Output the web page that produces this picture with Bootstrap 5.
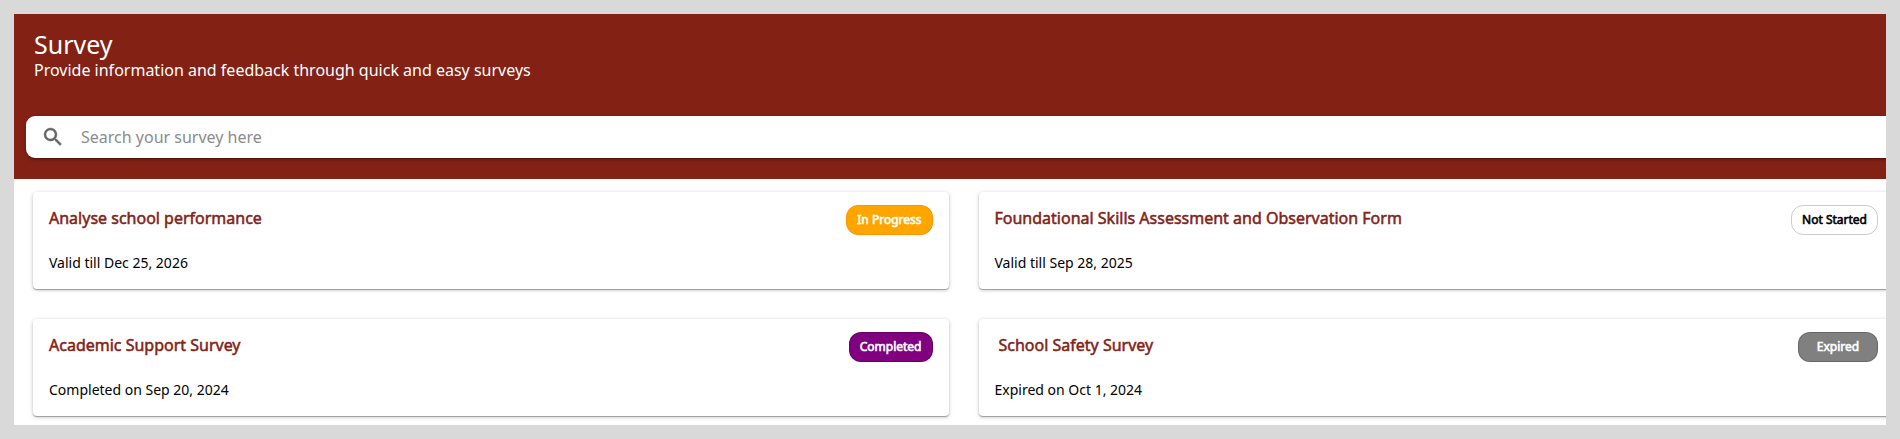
<!DOCTYPE html>
<html lang="en">
<head>
<meta charset="utf-8">
<meta name="viewport" content="width=device-width, initial-scale=1">
<title>Survey</title>
<link rel="stylesheet" href="https://cdn.jsdelivr.net/npm/bootstrap@5.3.0/dist/css/bootstrap.min.css">
<style>
  body { font-family: "Noto Sans", "Open Sans", sans-serif; background: #d9d9d9; color: #000; padding: 14px; }
  .survey-page { background: #fff; overflow: hidden; }
  .survey-head { background: #832115; padding: 16px 0 21px 12px; }
  .survey-head h1 { font-size: 25px; line-height: 28px; font-weight: 400; }
  .survey-head p { font-size: 16px; line-height: 24px; }
  .head-text { padding-left: 8px; margin-bottom: 34px; }
  .search-bar { height: 42px; margin-right: -12px; padding-left: 15px; gap: 12px; background: #fff; border-radius: 9px;
    box-shadow: 0 3px 1px -2px rgba(0,0,0,.2), 0 2px 2px rgba(0,0,0,.14), 0 1px 5px rgba(0,0,0,.12); }
  .search-bar .form-control { font-size: 16px; line-height: 24px; padding: 0 4px; }
  .search-bar .form-control::placeholder { color: #8b8b8b; }
  /* the card grid runs past the right edge of the page */
  .survey-grid { display: grid; grid-template-columns: 1fr 1fr; gap: 30px; padding: 13px 0 9px 19px; margin-right: -8px; }
  .survey-card { height: 97px; padding: 13px 16px; border: 0; border-radius: 4px;
    box-shadow: 0 1px 1px rgba(0,0,0,.3), 0 1px 4px rgba(0,0,0,.22); }
  .survey-card h2 { font-size: 16px; line-height: 26px; font-weight: 400; color: #832115; -webkit-text-stroke: .5px #832115; }
  .survey-card p { font-size: 14px; line-height: 20px; margin-top: 18px; }
  .status { height: 30px; min-width: 80px; padding: 0 10px; border: 1px solid rgba(0,0,0,.2); border-radius: 12px;
    font-size: 12px; line-height: 28px; text-align: center; -webkit-text-stroke: .6px currentColor; }
  .status-progress { background: orange; border-color: #ff9500; color: #fff; }
  .status-done { background: purple; color: #fff; }
  .status-expired { background: gray; color: #fff; }
</style>
</head>
<body>
<main class="survey-page">
  <header class="survey-head">
    <div class="head-text text-white">
      <h1 class="mb-0">Survey</h1>
      <p class="mb-0">Provide information and feedback through quick and easy surveys</p>
    </div>
    <form class="search-bar d-flex align-items-center" role="search">
      <svg width="24" height="24" viewBox="0 0 24 24" fill="#666" stroke="#666" stroke-width=".5" class="flex-shrink-0" aria-hidden="true"><path d="M15.5 14h-.79l-.28-.27A6.471 6.471 0 0 0 16 9.5 6.5 6.5 0 1 0 9.5 16c1.61 0 3.09-.59 4.23-1.57l.27.28v.79l5 4.99L20.49 19l-4.99-5zm-6 0C7.01 14 5 11.99 5 9.5S7.01 5 9.5 5 14 7.01 14 9.5 11.99 14 9.5 14z"/></svg>
      <input type="text" class="form-control border-0 shadow-none bg-transparent" placeholder="Search your survey here" aria-label="Search your survey here">
    </form>
  </header>
  <section class="survey-grid">
    <article class="card survey-card">
      <div class="d-flex justify-content-between">
        <h2 class="mb-0">Analyse school performance</h2>
        <span class="status status-progress">In Progress</span>
      </div>
      <p class="mb-0">Valid till Dec 25, 2026</p>
    </article>
    <article class="card survey-card">
      <div class="d-flex justify-content-between">
        <h2 class="mb-0">Foundational Skills Assessment and Observation Form</h2>
        <span class="status">Not Started</span>
      </div>
      <p class="mb-0">Valid till Sep 28, 2025</p>
    </article>
    <article class="card survey-card">
      <div class="d-flex justify-content-between">
        <h2 class="mb-0">Academic Support Survey</h2>
        <span class="status status-done">Completed</span>
      </div>
      <p class="mb-0">Completed on Sep 20, 2024</p>
    </article>
    <article class="card survey-card">
      <div class="d-flex justify-content-between">
        <h2 class="mb-0 ps-1">School Safety Survey</h2>
        <span class="status status-expired">Expired</span>
      </div>
      <p class="mb-0">Expired on Oct 1, 2024</p>
    </article>
  </section>
</main>
<script src="https://cdn.jsdelivr.net/npm/bootstrap@5.3.0/dist/js/bootstrap.bundle.min.js"></script>
</body>
</html>
